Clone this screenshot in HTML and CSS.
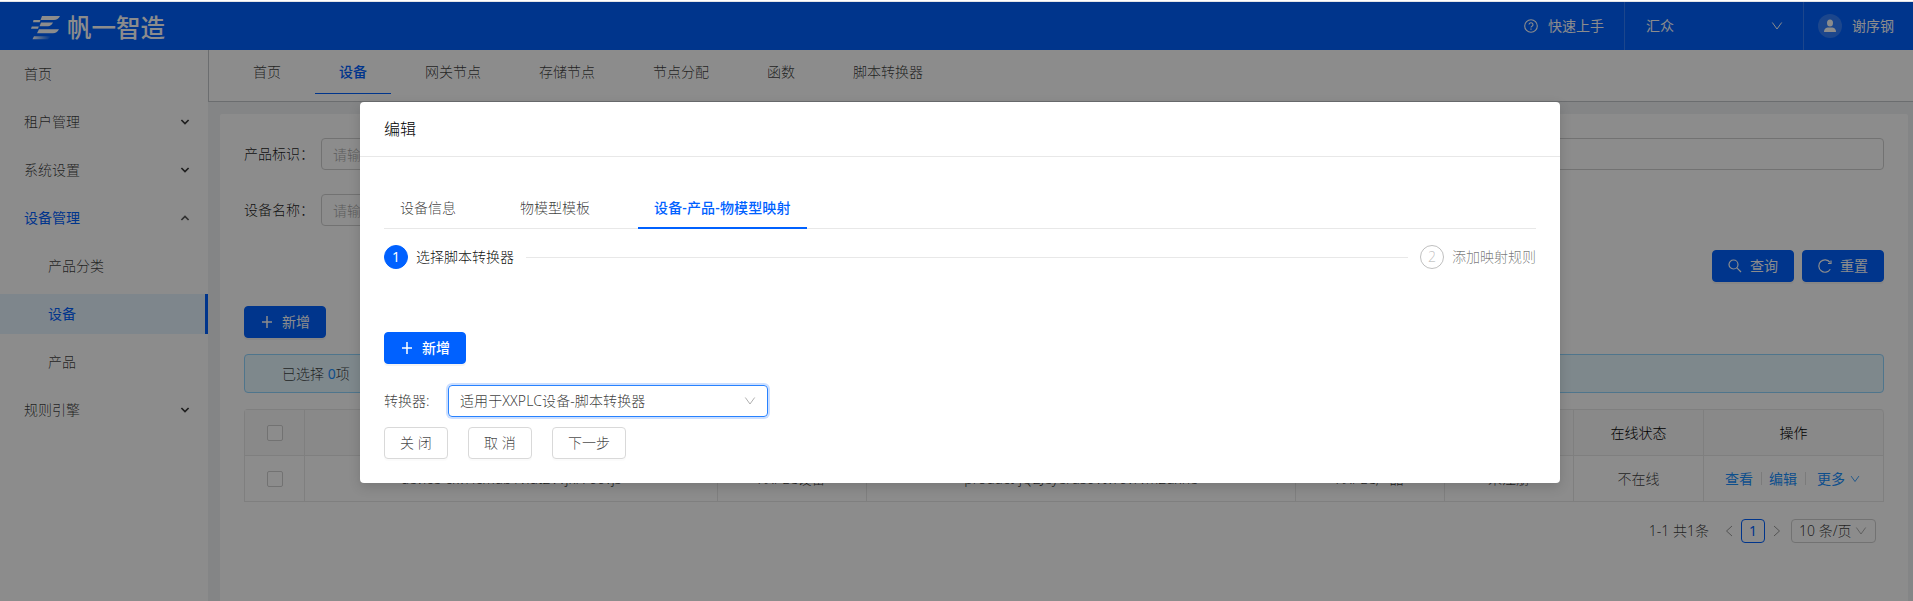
FILE: index.html
```html
<!DOCTYPE html>
<html lang="zh-CN">
<head>
<meta charset="utf-8">
<title>帆一智造</title>
<link rel="stylesheet" href="styles.css">
</head>
<body>
<svg class="defs" width="0" height="0">
  <symbol id="down" viewBox="0 0 12 12"><path d="M1.3 2.5 6 9 10.7 2.5" fill="none" stroke="currentColor" stroke-width="1"/></symbol>
  <symbol id="caret" viewBox="0 0 10 10"><path d="M1.4 3 5 6.5 8.600 3" fill="none" stroke="currentColor" stroke-width="1.7"/></symbol>
  <symbol id="plus" viewBox="0 0 14 14"><path d="M7 1v12M2 7h10" fill="none" stroke="currentColor" stroke-width="1.5"/></symbol>
</svg>
<div class="app">
  <header class="header">
    <div class="brand">
      <svg class="mark" width="30" height="26" viewBox="0 0 30 26">
        <defs><linearGradient id="fade"><stop offset="0" stop-color="#fff"/><stop offset="1" stop-color="#fff" stop-opacity="0"/></linearGradient></defs>
        <g fill="#fff">
          <path d="M11 1h18q-2 4-6 4H9.500z"/><path d="M2.500 5h7l-.8 2.300H2z"/>
          <path d="M10 7.500h12q-2 3.800-5 3.800H8.500z"/><path d="M.8 11.500h7l-.8 2.300H0z"/>
          <path d="M8 14.300h20q-2 3.900-6 3.900H6z"/>
        </g>
        <path d="M3 21.200h17l-3 3H1.500z" fill="url(#fade)"/>
      </svg>
      <span class="brand-name">帆一智造</span>
    </div>
    <div class="header-right">
      <a class="help">
        <svg width="14" height="14" viewBox="0 0 14 14" fill="none" stroke="currentColor"><circle cx="7" cy="7" r="6.300" stroke-width="1.100"/><path d="M5 5.600a2 1.900 0 1 1 2.700 1.800q-.7.3-.7 1.200" stroke-width="1.100"/><path d="M7 9.500v1.200" stroke-width="1.200"/></svg>
        快速上手
      </a>
      <div class="tenant"><span>汇众</span><svg width="12" height="12"><use href="#down"/></svg></div>
      <div class="user">
        <span class="avatar"><svg width="14" height="14" viewBox="0 0 14 14" fill="#fff"><ellipse cx="7" cy="4" rx="3" ry="3.600"/><path d="M1 13q0-4 3.500-4.500h5q3.500.5 3.500 4.500z"/></svg></span>
        谢序钢
      </div>
    </div>
  </header>
  <div class="body">
    <nav class="side">
      <a class="item">首页</a>
      <a class="item">租户管理<svg width="10" height="10"><use href="#caret"/></svg></a>
      <a class="item">系统设置<svg width="10" height="10"><use href="#caret"/></svg></a>
      <a class="item open">设备管理<svg class="up" width="10" height="10"><use href="#caret"/></svg></a>
      <a class="item sub">产品分类</a>
      <a class="item sub selected">设备</a>
      <a class="item sub">产品</a>
      <a class="item">规则引擎<svg width="10" height="10"><use href="#caret"/></svg></a>
    </nav>
    <main class="main">
      <div class="tabs">
        <a class="tab">首页</a><a class="tab active">设备</a><a class="tab">网关节点</a><a class="tab">存储节点</a><a class="tab">节点分配</a><a class="tab">函数</a><a class="tab">脚本转换器</a>
      </div>
      <section class="card">
        <div class="filters">
          <label class="field"><span>产品标识：</span><i>请输入</i></label>
          <label class="field"><span>产品名称：</span><i>请输入</i></label>
          <label class="field"><span>设备标识：</span><i></i></label>
          <label class="field"><span>设备名称：</span><i>请输入</i></label>
        </div>
        <div class="actions">
          <button class="btn primary"><svg width="14" height="14" viewBox="0 0 14 14" fill="none" stroke="currentColor" stroke-width="1.200"><circle cx="5.500" cy="5.500" r="4.500"/><path d="M8.700 8.700 13 13"/></svg>查询</button>
          <button class="btn primary"><svg width="14" height="14" viewBox="0 0 14 14" fill="none" stroke="currentColor" stroke-width="1.200"><path d="M12.300 10.300A6.200 6.200 0 1 1 12 3.300"/><path d="M13 1.500v3h-3"/></svg>重置</button>
        </div>
        <button class="btn primary add"><svg width="14" height="14"><use href="#plus"/></svg>新增</button>
        <div class="alert">已选择 <b>0</b>项</div>
        <table class="grid">
          <colgroup><col class="c1"><col class="c2"><col class="c3"><col class="c4"><col class="c5"><col class="c6"><col class="c7"><col class="c8"></colgroup>
          <tr><th><i class="check"></i></th><th>设备标识</th><th>设备名称</th><th>产品标识</th><th>产品名称</th><th>注册状态</th><th>在线状态</th><th>操作</th></tr>
          <tr><td><i class="check"></i></td><td>device-ckvHcmub1vfat2Vvjkr766vjs</td><td>XXPLC设备</td><td>product-jQ2Jeyerus6VIvr6vrvm2uxne</td><td>XXPLC产品</td><td>未注册</td><td>不在线</td>
            <td><div class="ops"><a>查看</a><a>编辑</a><a class="more">更多<svg width="10" height="10"><use href="#down"/></svg></a></div></td></tr>
        </table>
        <div class="pager">
          <span class="total">1-1 共1条</span>
          <svg class="arrow" width="8" height="12" viewBox="0 0 8 12"><path d="M7 1 1.500 6 7 11" fill="none" stroke="currentColor"/></svg>
          <span class="page">1</span>
          <svg class="arrow next" width="8" height="12" viewBox="0 0 8 12"><path d="M1 1l5.500 5L1 11" fill="none" stroke="currentColor"/></svg>
          <span class="size">10 条/页<svg width="12" height="12"><use href="#down"/></svg></span>
        </div>
      </section>
    </main>
  </div>
</div>
<div class="mask">
  <div class="modal">
    <h1 class="title">编辑</h1>
    <div class="content">
      <div class="mtabs"><a>设备信息</a><a>物模型模板</a><a class="on">设备-产品-物模型映射</a></div>
      <div class="steps">
        <span class="num now">1</span><span class="step">选择脚本转换器</span><span class="rail"></span><span class="num">2</span><span class="step wait">添加映射规则</span>
      </div>
      <button class="btn primary madd"><svg width="14" height="14"><use href="#plus"/></svg>新增</button>
      <div class="row"><span class="label">转换器:</span><div class="select"><span>适用于XXPLC设备-脚本转换器</span><svg width="12" height="12"><use href="#down"/></svg></div></div>
      <div class="foot"><button class="btn">关 闭</button><button class="btn">取 消</button><button class="btn next-step">下一步</button></div>
    </div>
  </div>
</div>
</body>
</html>
```
FILE: styles.css
```css
* { box-sizing: border-box; }
body { margin: 0; height: 601px; overflow: hidden; background: #fff; color: rgba(0,0,0,.78); font: 300 14px/22px "Noto Sans", "Noto Sans CJK SC", sans-serif; }
i { font-style: normal; }
.defs { position: absolute; }
svg { flex: none; }
.app { margin-top: 1px; border-top: 1px solid #e2e3e6; height: 600px; overflow: hidden; }
.header { height: 48px; background: #0061ff; color: #fff; display: flex; justify-content: space-between; }
.brand { display: flex; padding: 13px 0 0 31px; gap: 6px; }
.brand-name { font-size: 24.500px; line-height: 26px; font-weight: 500; }
.header-right { display: flex; line-height: 48px; font-weight: 400; }
.help { display: flex; align-items: center; gap: 10px; padding-right: 20px; }
.tenant { width: 179px; border-left: 1px solid rgba(255,255,255,.2); padding: 0 20px 0 21px; display: flex; align-items: center; justify-content: space-between; }
.user { width: 110px; border-left: 1px solid rgba(255,255,255,.2); padding-left: 14px; display: flex; align-items: center; gap: 10px; }
.avatar { width: 24px; height: 24px; border-radius: 50%; background: rgba(255,255,255,.2); display: flex; align-items: center; justify-content: center; }
.body { display: flex; height: 551px; }
.side { width: 208px; background: #fff; padding-top: 4px; display: flex; flex-direction: column; gap: 8px; }
.item { height: 40px; line-height: 40px; padding: 0 18px 0 24px; display: flex; align-items: center; justify-content: space-between; }
.up { transform: rotate(180deg); }
.open, .item.selected { color: #0061ff; font-weight: 400; }
.open svg { color: #595959; }
.sub { padding-left: 48px; }
.selected { background: #e6f4ff; border-right: 3px solid #0061ff; }
.main { flex: 1; background: #f0f2f5; }
.tabs { height: 52px; background: #fff; border-left: 1px solid #c4c6ca; border-bottom: 1px solid #c4c6ca; padding-left: 20px; display: flex; gap: 10px; }
.tab { height: 44px; padding: 0 24px; line-height: 44px; }
.active { color: #0061ff; font-weight: 500; border-bottom: 1px solid #0061ff; }
.card { margin: 12px 5px 0 12px; height: 600px; background: #fff; border-radius: 2px; padding: 24px; }
.filters { display: grid; grid-template-columns: repeat(3, 1fr); gap: 24px; }
.field { display: flex; line-height: 32px; color: rgba(0,0,0,.9); }
.field span { width: 77px; }
.field i { flex: 1; height: 32px; line-height: 31px; border: 1px solid #d0d0d0; border-radius: 4px; padding: 0 11px; color: #aaa; }
.actions { display: flex; justify-content: flex-end; gap: 8px; margin-top: 24px; }
.btn { height: 32px; border: 1px solid #d9d9d9; border-radius: 4px; background: #fff; color: rgba(0,0,0,.75); font: inherit; padding: 0 15px; display: flex; align-items: center; box-shadow: 0 2px 0 rgba(0,0,0,.015); }
.primary { width: 82px; background: #0061ff; border-color: #0061ff; color: #fff; font-weight: 400; gap: 8px; box-shadow: 0 2px 0 rgba(0,0,0,.045); }
.add { margin-top: 24px; }
.alert { margin-top: 16px; height: 39px; line-height: 37px; background: #e6f7ff; border: 1px solid #91d5ff; border-radius: 4px; padding-left: 37px; }
.alert b { color: #1890ff; font-weight: 400; }
.grid { margin-top: 16px; width: 1640px; table-layout: fixed; border-collapse: separate; border-spacing: 0; border-top: 1px solid #e8e8e8; border-left: 1px solid #e8e8e8; border-radius: 4px 4px 0 0; }
.grid th, .grid td { height: 46px; padding: 0; text-align: center; border-right: 1px solid #e8e8e8; border-bottom: 1px solid #e8e8e8; font-weight: 300; }
.grid th { background: #fafafa; color: #000; }
.grid th:last-child { border-radius: 0 4px 0 0; }
.c1 { width: 60px; } .c2 { width: 413px; } .c3 { width: 149px; } .c4 { width: 429px; } .c5 { width: 149px; } .c6 { width: 129px; } .c7 { width: 130px; } .c8 { width: 180px; }
.check { display: block; width: 16px; height: 16px; margin: 0 auto; border: 1px solid #d0d0d0; border-radius: 2px; background: #fff; }
.ops { display: flex; align-items: center; padding-left: 21px; color: #1890ff; font-weight: 400; }
.ops a + a { margin-left: 8px; padding-left: 8px; background: linear-gradient(#e0e0e0, #e0e0e0) left center / 1px 13px no-repeat; }
.ops .more { display: flex; align-items: center; gap: 5px; padding-left: 12px; }
.pager { display: flex; align-items: center; justify-content: flex-end; margin: 17px 8px 0 0; height: 24px; }
.total { margin-right: 16px; }
.arrow { color: #999; }
.page { width: 24px; height: 24px; line-height: 22px; text-align: center; border: 1px solid #0061ff; color: #0061ff; border-radius: 4px; margin: 0 8px; font-weight: 400; }
.size { width: 85px; height: 24px; line-height: 22px; border: 1px solid #d0d0d0; border-radius: 4px; margin-left: 10px; padding: 0 8px 0 7px; display: flex; align-items: center; justify-content: space-between; }
.size svg, .select svg { color: #b0b0b0; }
.mask { position: absolute; inset: 2px 0 0 0; background: rgba(0,0,0,.45); padding: 100px 0 0 360px; }
.modal { width: 1200px; height: 381px; background: #fff; border-radius: 4px; box-shadow: 0 4px 12px rgba(0,0,0,.15); }
.title { margin: 0; height: 55px; line-height: 54px; padding-left: 24px; font-size: 16px; font-weight: 300; color: #000; border-bottom: 1px solid #e8e8e8; }
.content { padding: 28px 24px 0; }
.mtabs { display: flex; gap: 32px; height: 44px; border-bottom: 1px solid #e8e8e8; }
.mtabs a { height: 44px; line-height: 45px; padding: 0 16px; }
.mtabs .on { width: 169px; white-space: nowrap; letter-spacing: .15px; color: #0061ff; font-weight: 500; border-bottom: 2px solid #0061ff; }
.steps { margin-top: 16px; height: 24px; display: flex; align-items: center; }
.num { width: 24px; height: 24px; line-height: 22px; border: 1px solid rgba(0,0,0,.25); border-radius: 50%; text-align: center; color: rgba(0,0,0,.25); }
.now { background: #0061ff; border-color: #0061ff; color: #fff; font-weight: 400; }
.step { margin-left: 8px; color: rgba(0,0,0,.95); }
.wait { color: rgba(0,0,0,.55); }
.rail { flex: 1; height: 1px; background: #e8e8e8; margin: 0 12px; }
.madd { margin-top: 63px; font-weight: 500; }
.row { display: flex; line-height: 32px; margin-top: 21px; }
.label { width: 64px; }
.select { width: 320px; height: 32px; line-height: 30px; border: 1px solid #2882ff; border-radius: 4px; box-shadow: 0 0 0 2px rgba(0,97,255,.2); padding: 0 11px; display: flex; align-items: center; justify-content: space-between; }
.select span { letter-spacing: .1px; }
.foot { display: flex; gap: 20px; margin-top: 10px; }
.foot .btn { width: 64px; white-space: nowrap; }
.foot .next-step { width: 74px; }
```
